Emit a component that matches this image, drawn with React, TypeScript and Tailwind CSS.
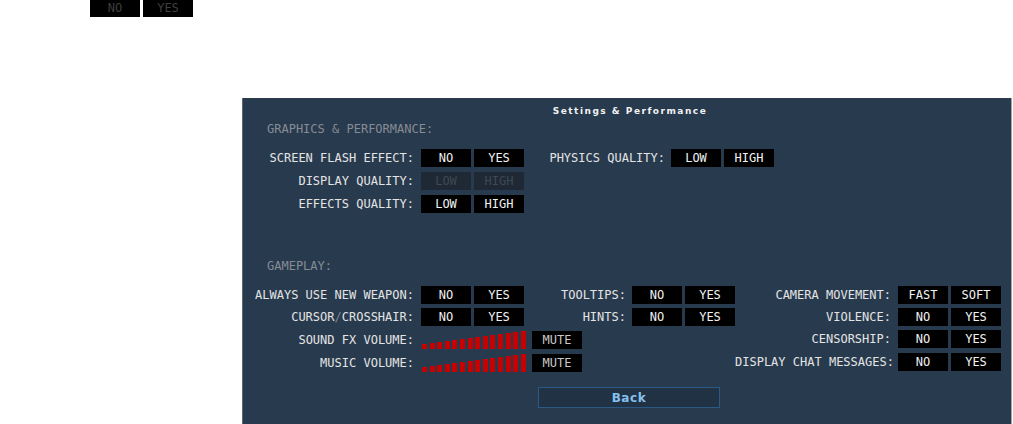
import React from "react";

const mono = { fontFamily: '"DejaVu Sans Mono", "Liberation Mono", monospace' };
const sans = { fontFamily: '"DejaVu Sans", "Liberation Sans", sans-serif' };

function Btn({ label, disabled, dim }: { label: string; disabled?: boolean; dim?: boolean }) {
  return (
    <div
      className={
        "w-[50px] h-[18px] flex items-center justify-center text-[12px] leading-[18px] " +
        (disabled ? "bg-[#1f2835] text-[#3e4853]" : dim ? "bg-black text-[#c9c9c9]" : "bg-black text-[#f2f2f2]")
      }
      style={mono}
    >
      {label}
    </div>
  );
}

function Pair({ a, b, disabled }: { a: string; b: string; disabled?: boolean }) {
  return (
    <div className="flex gap-[3px]">
      <Btn label={a} disabled={disabled} />
      <Btn label={b} disabled={disabled} />
    </div>
  );
}

function Label({ children, pr = "pr-[7px]" }: { children: React.ReactNode; pr?: string }) {
  return (
    <div className={"h-[18px] text-right text-[12px] leading-[18px] text-[#e4e4e4] whitespace-nowrap " + pr} style={mono}>
      {children}
    </div>
  );
}

function Bars() {
  const heights = [5, 6, 7, 8, 9, 10, 11, 12, 13, 14, 15, 16, 17, 18];
  return (
    <div className="flex items-end justify-between w-[104px] h-[18px] ml-[1px]">
      {heights.map((h, i) => (
        <div key={i} className="w-[5px] bg-[#c80000]" style={{ height: h }} />
      ))}
    </div>
  );
}

function Volume() {
  return (
    <div className="flex items-center mt-[1px]">
      <Bars />
      <div className="ml-[6px]">
        <Btn label="MUTE" dim />
      </div>
    </div>
  );
}

function Header({ children }: { children: React.ReactNode }) {
  return (
    <div className="pl-[24px] text-[12px] leading-[14px] text-[#868c94]" style={mono}>
      {children}
    </div>
  );
}

export default function App() {
  return (
    <div className="w-[1013px] h-[424px] bg-white overflow-hidden">
      <div className="flex gap-[3px] pl-[90px]">
        <div className="w-[50px] h-[17px] bg-black text-[#3f3f3f] text-[12px] leading-[17px] text-center" style={mono}>NO</div>
        <div className="w-[50px] h-[17px] bg-black text-[#3f3f3f] text-[12px] leading-[17px] text-center" style={mono}>YES</div>
      </div>

      <div className="ml-[242px] mt-[81px] w-[770px] h-[326px] bg-[#283a4e] border-l border-l-[#5d6772] border-r border-r-[#a2a8ae] pt-[7px]">
        <div className="text-center text-[9px] leading-[12px] font-bold text-[#f2f2f2] tracking-[1.5px] pl-[6px]" style={sans}>
          Settings &amp; Performance
        </div>

        <div className="mt-[5px]">
          <Header>GRAPHICS &amp; PERFORMANCE:</Header>
        </div>

        <div className="mt-[13px] grid grid-cols-[178px_103px_147px_103px] gap-y-[5px]">
          <Label>SCREEN FLASH EFFECT:</Label>
          <Pair a="NO" b="YES" />
          <Label pr="pr-[6px]">PHYSICS QUALITY:</Label>
          <Pair a="LOW" b="HIGH" />

          <Label>DISPLAY QUALITY:</Label>
          <Pair a="LOW" b="HIGH" disabled />
          <div />
          <div />

          <Label>EFFECTS QUALITY:</Label>
          <Pair a="LOW" b="HIGH" />
          <div />
          <div />
        </div>

        <div className="mt-[46px]">
          <Header>GAMEPLAY:</Header>
        </div>

        <div className="mt-[13px] grid grid-cols-[178px_103px_108px_103px_163px_103px] gap-y-[4px] items-start">
          <Label>ALWAYS USE NEW WEAPON:</Label>
          <Pair a="NO" b="YES" />
          <Label pr="pr-[6px]">TOOLTIPS:</Label>
          <Pair a="NO" b="YES" />
          <Label>CAMERA MOVEMENT:</Label>
          <Pair a="FAST" b="SOFT" />

          <Label>
            CURSOR<span className="text-[#7d858f]">/</span>CROSSHAIR:
          </Label>
          <Pair a="NO" b="YES" />
          <Label pr="pr-[6px]">HINTS:</Label>
          <Pair a="NO" b="YES" />
          <Label>VIOLENCE:</Label>
          <Pair a="NO" b="YES" />

          <div className="mt-[1px]">
            <Label>SOUND FX VOLUME:</Label>
          </div>
          <div className="col-span-3">
            <Volume />
          </div>
          <Label>CENSORSHIP:</Label>
          <Pair a="NO" b="YES" />

          <div className="mt-[1px]">
            <Label>MUSIC VOLUME:</Label>
          </div>
          <div className="col-span-3">
            <Volume />
          </div>
          <Label>DISPLAY CHAT MESSAGES:</Label>
          <Pair a="NO" b="YES" />
        </div>

        <div className="mt-[15px] ml-[295px] w-[182px] h-[21px] border border-[#2c5a86] bg-[#223245] flex items-center justify-center">
          <span className="text-[12px] leading-[14px] font-bold text-[#86c0ee] tracking-[0.6px]" style={sans}>
            Back
          </span>
        </div>
      </div>
    </div>
  );
}
